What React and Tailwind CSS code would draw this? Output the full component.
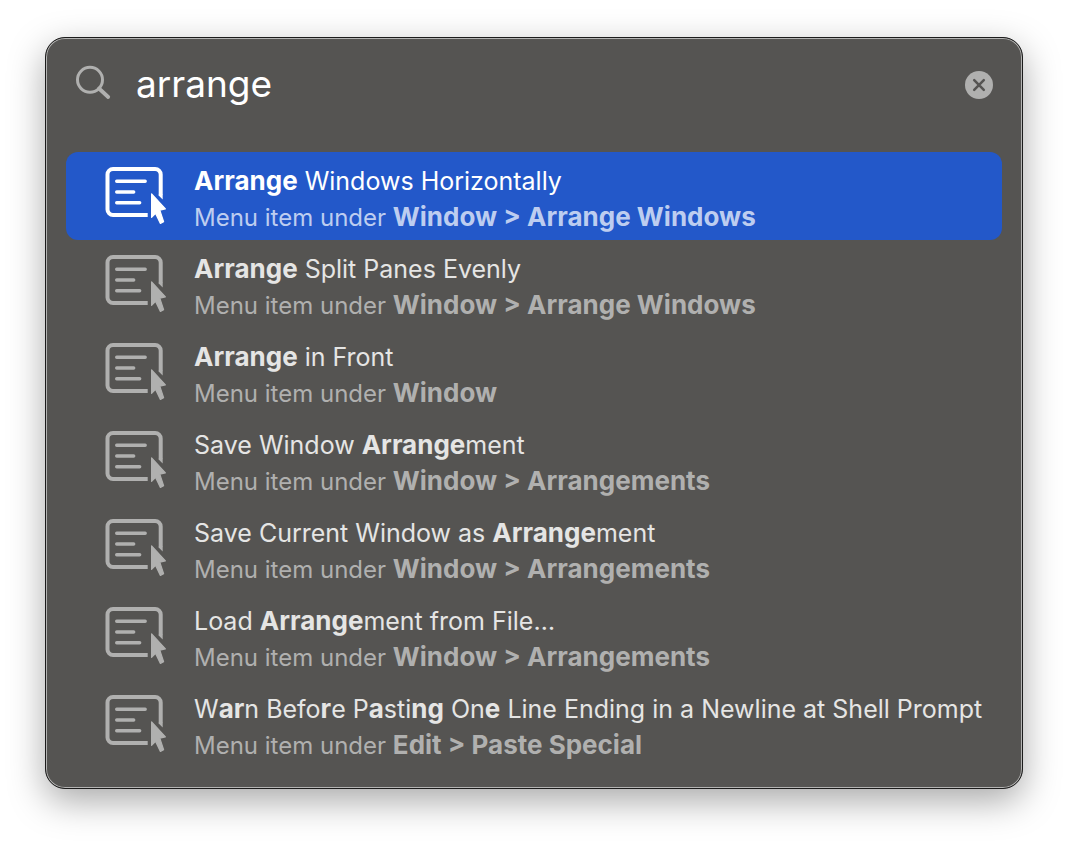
import { useState } from "react";

const RESULTS = [
  { title: "*Arrange* Windows Horizontally", path: "Window > Arrange Windows" },
  { title: "*Arrange* Split Panes Evenly", path: "Window > Arrange Windows" },
  { title: "*Arrange* in Front", path: "Window" },
  { title: "Save Window *Arrange*ment", path: "Window > Arrangements" },
  { title: "Save Current Window as *Arrange*ment", path: "Window > Arrangements" },
  { title: "Load *Arrange*ment from File…", path: "Window > Arrangements" },
  {
    title: "W*ar*n Befo*r*e P*a*sti*ng* On*e* Line Ending in a Newline at Shell Prompt",
    path: "Edit > Paste Special",
  },
];

function MenuItemIcon() {
  return (
    <svg viewBox="0 -1 64 64" className="size-16 shrink-0" fill="none" stroke="currentColor" aria-hidden="true">
      <path d="M43.7 51H9a5.5 5.5 0 0 1-5.5-5.5v-35A5.5 5.5 0 0 1 9 5h42.2a5.5 5.5 0 0 1 5.5 5.5V31" strokeWidth="4" />
      <path d="M54.7 30.5h4V35.5l-4-4z" fill="currentColor" stroke="none" />
      <path d="M12.7 17.3h28.5M12.7 28h17M12.7 38.7h23" strokeWidth="3.4" strokeLinecap="round" />
      <path
        d="M47.6 29.8 61.4 44.8 55.8 46.2 59.6 57.8 56.4 59.4 51.6 49.4 47.6 53.4z"
        fill="currentColor"
        strokeWidth="1.2"
        strokeLinejoin="round"
      />
    </svg>
  );
}

function Highlighted({ text }) {
  return text.split("*").map((part, i) =>
    i % 2 ? (
      <b key={i} className="text-[26px] font-bold">{part}</b>
    ) : (
      <span key={i}>{part}</span>
    )
  );
}

function Result({ item, selected, onSelect }) {
  return (
    <li>
      <button
        type="button"
        aria-current={selected}
        onClick={onSelect}
        className={`flex h-22 w-full items-start rounded-xl pt-[11px] pl-[38px] text-left whitespace-nowrap ${
          selected ? "bg-[#2358c9] text-white" : "text-[#e5e5e4]"
        }`}
      >
        <span className={selected ? "text-white" : "text-[#b0b0af]"}>
          <MenuItemIcon />
        </span>
        <span className="flex flex-col pl-[26px] text-[25px] leading-9">
          <span>
            <Highlighted text={item.title} />
          </span>
          <span className={`text-[24px] ${selected ? "text-[#bdcdf0]" : "text-[#b0b0af]"}`}>
            Menu item under <b className="text-[26px] font-bold">{item.path}</b>
          </span>
        </span>
      </button>
    </li>
  );
}

export default function App() {
  const [query, setQuery] = useState("arrange");
  const [selected, setSelected] = useState(0);

  return (
    <main className="min-h-screen bg-white px-[45px] pt-[37px] pb-[53px] font-['Inter',sans-serif]">
      <section className="rounded-[20px] border border-[#1c1c1c] bg-[#555452] shadow-[inset_0_0_0_1px_#b4b4b3,0_12px_36px_rgba(0,0,0,0.34)]">
        <div className="flex h-[114px] items-start pt-5 pr-[29px] pl-[29px]">
          <svg viewBox="0 0 36 36" className="mt-[7px] size-9 shrink-0" fill="none" stroke="#b0b0af" aria-hidden="true">
            <circle cx="15" cy="14.8" r="12.5" strokeWidth="3" />
            <path d="M24 23.5 33.2 32" strokeWidth="3.8" strokeLinecap="round" />
          </svg>
          <input
            type="text"
            aria-label="Search"
            value={query}
            onChange={(e) => setQuery(e.target.value)}
            className="h-[52px] min-w-0 flex-1 bg-transparent pl-[25px] text-[37px] text-white outline-none"
          />
          <button type="button" aria-label="Clear search" onClick={() => setQuery("")} className="mt-[13px]">
            <svg viewBox="0 0 28 28" className="size-7" aria-hidden="true">
              <circle cx="14" cy="14" r="14" fill="#b0b0af" />
              <path d="m9.2 9.2 9.6 9.6M18.8 9.2 9.2 18.8" stroke="#555452" strokeWidth="2.5" strokeLinecap="round" />
            </svg>
          </button>
        </div>
        <ul className="px-5 pb-5">
          {RESULTS.map((item, i) => (
            <Result key={item.title} item={item} selected={i === selected} onSelect={() => setSelected(i)} />
          ))}
        </ul>
      </section>
    </main>
  );
}
